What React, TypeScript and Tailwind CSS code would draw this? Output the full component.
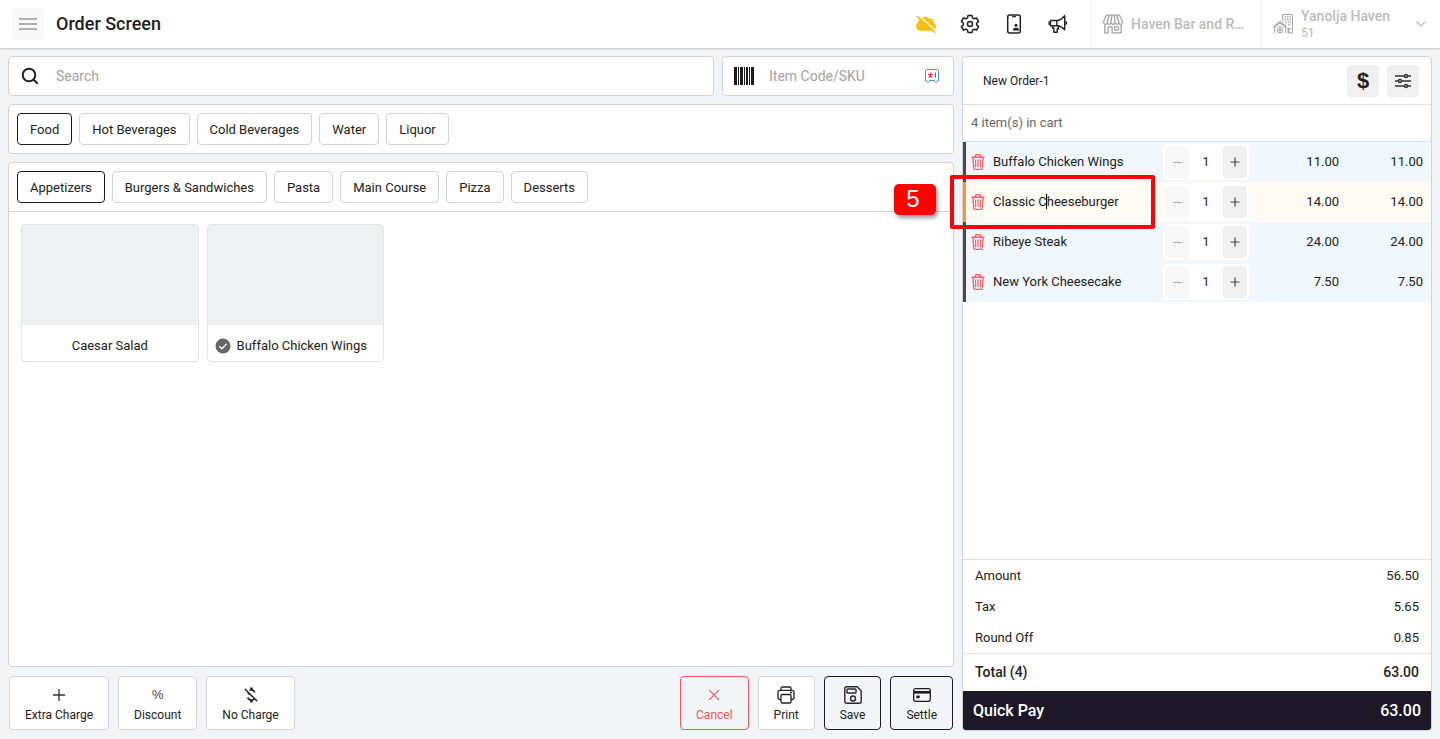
import { useState } from 'react'
import { clsx } from 'clsx'

interface CartItem {
  id: number
  name: string
  qty: number
  price: number
}

const categories = ['Food', 'Hot Beverages', 'Cold Beverages', 'Water', 'Liquor']
const subCategories = ['Appetizers', 'Burgers & Sandwiches', 'Pasta', 'Main Course', 'Pizza', 'Desserts']
const products = ['Caesar Salad', 'Buffalo Chicken Wings']

const cartItems: CartItem[] = [
  { id: 1, name: 'Buffalo Chicken Wings', qty: 1, price: 11 },
  { id: 2, name: 'Classic Cheeseburger', qty: 1, price: 14 },
  { id: 3, name: 'Ribeye Steak', qty: 1, price: 24 },
  { id: 4, name: 'New York Cheesecake', qty: 1, price: 7.5 },
]

const summary = [
  { label: 'Amount', value: '56.50' },
  { label: 'Tax', value: '5.65' },
  { label: 'Round Off', value: '0.85' },
]

function CloudOffIcon() {
  return (
    <svg viewBox="0 0 20 20" className="h-5 w-5" aria-hidden="true">
      <path
        d="M4.600 16.800A4.500 4.500 0 0 1 2 8.600 6 6 0 0 1 6.500 3.200a6 6 0 0 1 6.700 1.600 3.600 3.600 0 0 1 4.500 4.400A4 4 0 0 1 16.500 16.800z"
        fill="#fdc010"
      />
      <path d="M2.400 1 20 17" stroke="#fff" strokeWidth="1.300" />
      <path d="M1.400 2.600 18.600 18.200" stroke="#fdc010" strokeWidth="1.700" strokeLinecap="round" />
    </svg>
  )
}

function GearIcon() {
  return (
    <svg viewBox="0 0 24 24" className="h-5 w-5" fill="none" stroke="#222" strokeWidth="1.8" strokeLinejoin="round" aria-hidden="true">
      <path d="M9.6 1.700h4.8l.6 3 1.9 1.1 2.9-1 2.5 4.2-2.3 1.9v2.2l2.3 2-2.5 4.1-2.9-1-1.9 1.1-.6 3H9.6l-.6-3-1.9-1.1-2.9 1-2.5-4.1 2.3-2v-2.2L1.700 9l2.500-4.200 2.900 1L9 4.700z" />
      <circle cx="12" cy="12" r="3" />
    </svg>
  )
}

function PhoneUserIcon() {
  return (
    <svg viewBox="0 0 20 20" className="h-5 w-5" fill="none" stroke="#222" strokeWidth="1.5" aria-hidden="true">
      <rect x="3.700" y="1" width="12.600" height="18" rx="2" />
      <path d="M8 2.700h4" strokeWidth="1.200" />
      <circle cx="12" cy="11.300" r="1.500" fill="#222" stroke="none" />
      <path d="M9 16.600v-1.200c0-1 1.200-1.600 3-1.600s3 .6 3 1.600v1.200z" fill="#222" stroke="none" />
    </svg>
  )
}

function MegaphoneIcon() {
  return (
    <svg viewBox="0 0 20 20" className="h-5 w-5" fill="none" stroke="#222" strokeWidth="1.400" strokeLinejoin="round" aria-hidden="true">
      <path d="M2.500 6.500H9.500c2.500-.2 4.800-1.800 7.200-4.700v14c-2.400-2.700-4.700-3.900-7.200-4H2.500z" />
      <path d="M8.800 6.500v5.300M4.500 11.800v2.200h1.300v4.300h3.400v-3.600h1.200v-2.700" />
      <path d="M17 7.700c2.200 0 2.200 2.700 0 2.700M1.200 7.300v3.700" />
    </svg>
  )
}

function StoreIcon() {
  return (
    <svg viewBox="0 0 20 20" className="h-5 w-5 shrink-0" fill="none" stroke="#a3a3a3" strokeWidth="1.300" strokeLinejoin="round" aria-hidden="true">
      <path d="M3.500 1.200h13L19.300 7v1.500c0 2.400-3.700 2.400-3.700 0 0 2.400-3.700 2.400-3.700 0 0 2.400-3.800 2.400-3.800 0 0 2.400-3.700 2.400-3.700 0 0 2.400-3.700 2.400-3.700 0V7z" />
      <path d="M6.300 1.500 4.400 7v1.500M8.800 1.500 8.100 7v1.500M11.200 1.500l.7 5.500v1.500M13.700 1.500 15.600 7v1.500" />
      <path d="M1.800 10.500v8.300h3.400v-6h3.900v6h9.100v-8.300M11.500 12.800h4v3h-4z" />
    </svg>
  )
}

function PropertyIcon() {
  return (
    <svg viewBox="0 0 20 20" className="h-5 w-5 shrink-0" fill="none" stroke="#a8a8a8" aria-hidden="true">
      <path d="M9.500 7V.5h10v18.500H15M14 14.500h4" />
      <path d="M15.500 15v4" strokeWidth="2" />
      <path d="M11.500 3h6.500M11.500 5.500h6.500M12.500 8h5.500M15 10.500h3" strokeWidth="1.400" strokeDasharray="1.400 1.100" />
      <path d="M.6 13.500 7 8l6.400 5.500" strokeWidth="1.900" />
      <path d="M1.500 13v6M12.500 13v6M4.800 18.500v-4c0-2.700 4.400-2.700 4.400 0v4zM7 12.500v6M4.800 15.700h4.400" />
    </svg>
  )
}

function TrashIcon() {
  return (
    <svg viewBox="0 0 14 16" className="h-4 w-3.5" fill="none" stroke="#fb6268" strokeWidth="1.400" aria-hidden="true">
      <path d="M.5 3.300h13M4.500 3V1.600c0-.6.3-.9.900-.9h3.200c.6 0 .9.300.9.900V3" />
      <path d="M1.900 3.500 2.700 14c.1.900.6 1.400 1.400 1.400h5.800c.8 0 1.300-.5 1.400-1.400l.8-10.500" />
      <path d="M4.600 5.600v7.600M7 5.600v7.600M9.400 5.600v7.600" strokeWidth="1.200" />
    </svg>
  )
}

function BarcodeIcon() {
  return (
    <svg viewBox="0 0 20 18" className="h-[18px] w-5 shrink-0" fill="#1c1c1c" aria-hidden="true">
      <path d="M0 0h3v18H0zM4 0h1v18H4zM6 0h3v18H6zM10 0h1v18h-1zM12 0h2v18h-2zM15 0h1v18h-1zM17 0h3v18h-3z" />
    </svg>
  )
}

function ScanIcon() {
  return (
    <svg viewBox="0 0 14 14" className="h-3.5 w-3.5 shrink-0" fill="none" stroke="#4d90cf" strokeWidth="1" aria-hidden="true">
      <path d="M2 .5h10c1 0 1.500.5 1.500 1.500v9.500h-1c0 2.600-3 2.600-3 0h-5c0 2.600-3 2.600-3 0h-1V2C.5 1 1 .5 2 .5z" />
      <path d="M10.500 3.500v5" stroke="#3b6ea8" />
      <path d="M5.500 3.500V6M3 5.300 5.500 6 8 5.300M4 8.600 5.500 6 7 8.600" stroke="#f03b47" strokeWidth="1.200" />
    </svg>
  )
}

function SlidersIcon() {
  return (
    <svg viewBox="0 0 16 16" className="h-4 w-4" fill="none" stroke="#333" strokeWidth="1.500" aria-hidden="true">
      <path d="M0 3h9.500M12.500 3H16M0 8h3.500M6.500 8H16M0 13h9.500M12.500 13H16" />
      <circle cx="11" cy="3" r="1.500" />
      <circle cx="5" cy="8" r="1.500" />
      <circle cx="11" cy="13" r="1.500" />
    </svg>
  )
}

function NoChargeIcon() {
  return (
    <svg viewBox="0 0 24 24" className="h-5 w-5" fill="#222" aria-hidden="true">
      <path d="M12.500 6.900c1.780 0 2.440.85 2.500 2.100h2.210c-.07-1.720-1.120-3.300-3.210-3.810V3h-3v2.160c-.53.12-1.030.3-1.480.54l1.470 1.470c.41-.17.91-.27 1.510-.27zM5.330 4.060 4.060 5.330 7.500 8.770c0 2.080 1.560 3.210 3.910 3.910l3.510 3.510c-.34.48-1.050.91-2.420.91-2.060 0-2.870-.92-2.980-2.100h-2.200c.12 2.190 1.760 3.420 3.680 3.830V21h3v-2.150c.96-.18 1.820-.55 2.450-1.120l2.220 2.220 1.270-1.270L5.330 4.060z" />
    </svg>
  )
}

function PrinterIcon() {
  return (
    <svg viewBox="0 0 18 18" className="h-[18px] w-[18px]" fill="none" stroke="#222" strokeWidth="1.300" aria-hidden="true">
      <path d="M4 4V2.500C4 1.500 4.600 1 5.500 1h7c.9 0 1.500.5 1.500 1.500V4" />
      <path d="M4 13.500H3c-1.300 0-2-.7-2-2V6.400C1 5 1.800 4.300 3 4.300h12c1.200 0 2 .7 2 2.100v5.100c0 1.300-.7 2-2 2h-1" />
      <rect x="4" y="8.500" width="10" height="8.500" rx="1.200" />
      <path d="M13 6.500h2" />
    </svg>
  )
}

function SaveIcon() {
  return (
    <svg viewBox="0 0 18 18" className="h-[18px] w-[18px]" fill="none" stroke="#2b2734" strokeWidth="1.400" aria-hidden="true">
      <path d="M2.800.8h10.400l4 4.200v10.200c0 1.300-.7 2-2 2H2.800c-1.300 0-2-.7-2-2V2.800c0-1.300.7-2 2-2z" />
      <rect x="3" y="3" width="9" height="4" rx=".8" />
      <circle cx="9" cy="12.500" r="2.500" />
    </svg>
  )
}

function CardIcon() {
  return (
    <svg viewBox="0 0 18 18" className="h-[18px] w-[18px]" fill="none" stroke="#1f1a28" strokeWidth="1.300" aria-hidden="true">
      <rect x=".7" y="2.700" width="16.600" height="12.600" rx="2" />
      <path d="M1 6.300h16" strokeWidth="2.600" />
      <path d="M3.300 10.900h3.400" strokeWidth="2.600" />
    </svg>
  )
}

function TabButton({ label, active, onClick }: { label: string; active: boolean; onClick: () => void }) {
  return (
    <button
      type="button"
      onClick={onClick}
      className={clsx(
        'h-8 rounded border bg-white px-3 pt-0.5 text-[13px] text-[#212121]',
        active ? 'border-[#1e1928]' : 'border-[#d0d3d9]'
      )}
    >
      {label}
    </button>
  )
}

interface ActionButtonProps {
  label: string
  icon: React.ReactNode
  className?: string
}

function ActionButton({ label, icon, className }: ActionButtonProps) {
  return (
    <button
      type="button"
      className={clsx('flex h-[54px] flex-col items-center rounded border px-[15px] pt-2 text-xs', className)}
    >
      <span className="flex h-5 items-center">{icon}</span>
      <span className="leading-5">{label}</span>
    </button>
  )
}

function Header() {
  return (
    <header className="flex h-12 shrink-0 items-center bg-white shadow-[0_1px_2px_rgba(0,0,0,0.2)]">
      <button type="button" aria-label="Menu" className="ml-3 flex h-8 w-8 items-center justify-center rounded bg-[#f8f8f8]">
        <svg viewBox="0 0 18 12" className="h-3 w-[18px]" stroke="#999" strokeWidth="1.500" aria-hidden="true">
          <path d="M0 1h18M0 6h18M0 11h18" />
        </svg>
      </button>
      <h1 className="ml-3 flex-1 text-lg font-medium text-[#222]">Order Screen</h1>

      <div className="mr-[22px] flex items-center gap-6">
        <button type="button" aria-label="Offline"><CloudOffIcon /></button>
        <button type="button" aria-label="Settings"><GearIcon /></button>
        <button type="button" aria-label="Device"><PhoneUserIcon /></button>
        <button type="button" aria-label="Announcements"><MegaphoneIcon /></button>
      </div>

      <button type="button" className="flex h-full w-[170px] items-center gap-2 border-l border-[#f2f2f2] px-3 text-sm font-medium text-[#bbb]">
        <StoreIcon />
        <span className="whitespace-nowrap">Haven Bar and R…</span>
      </button>
      <button type="button" className="flex h-full w-[180px] items-center gap-2 border-l border-[#f2f2f2] pr-[14px] pl-3 text-left text-[#bbb]">
        <PropertyIcon />
        <span className="flex-1">
          <span className="block text-sm leading-[18px] font-medium">Yanolja Haven</span>
          <span className="block text-xs leading-4">51</span>
        </span>
        <svg viewBox="0 0 10 6" className="h-1.5 w-2.5" fill="none" stroke="#bbb" strokeWidth="1.200" aria-hidden="true">
          <path d="M.5.5 5 5 9.500.5" />
        </svg>
      </button>
    </header>
  )
}

function CartRow({ item, selected }: { item: CartItem; selected: boolean }) {
  return (
    <tr className={clsx('h-10', selected ? 'bg-[#fffaf3]' : 'bg-[#f1f7fe]')}>
      <td className={clsx('relative border-l-[3px] p-0', selected ? 'border-[#ff922b]' : 'border-[#4b4652]')}>
        <div className="flex items-center gap-2 pl-[5px]">
          <button type="button" aria-label={`Remove ${item.name}`}><TrashIcon /></button>
          {selected ? (
            <span>
              Classic C<span className="-ml-px inline-block h-[15px] w-px bg-black align-[-3px]" />heeseburger
            </span>
          ) : (
            <span>{item.name}</span>
          )}
        </div>
        {selected && (
          <>
            <div className="pointer-events-none absolute -top-[7px] -left-4 h-[54px] w-[205px] rounded-[2px] border-4 border-[#fe0000]" />
            <div className="absolute top-0.5 -left-[72px] flex h-[31px] w-[42px] items-center justify-center rounded-[5px] bg-[#fe0000] pr-1 pb-0.5 font-['Liberation_Sans',sans-serif] text-2xl text-white shadow-[2px_3px_4px_rgba(0,0,0,0.4)]">
              5
            </div>
          </>
        )}
      </td>
      <td className="p-0">
        <div className="flex h-9 items-center rounded bg-white p-0.5">
          <button type="button" disabled aria-label="Decrease" className="flex h-8 w-6 shrink-0 items-center justify-center rounded bg-[#f8f8f8]">
            <span className="h-px w-[9px] bg-[#aaa]" />
          </button>
          <input
            aria-label={`Quantity of ${item.name}`}
            defaultValue={item.qty}
            className="w-full min-w-0 bg-transparent text-center text-[#1e2a66] outline-none"
          />
          <button type="button" aria-label="Increase" className="flex h-8 w-6 shrink-0 items-center justify-center rounded bg-[#f0f0f0]">
            <svg viewBox="0 0 10 10" className="h-2.5 w-2.5" stroke="#444" strokeWidth="1.200" aria-hidden="true">
              <path d="M5 .5v9M.5 5h9" />
            </svg>
          </button>
        </div>
      </td>
      <td className="p-0 text-right">{item.price.toFixed(2)}</td>
      <td className="py-0 pr-2 pl-0 text-right">{(item.qty * item.price).toFixed(2)}</td>
    </tr>
  )
}

export default function App() {
  const [category, setCategory] = useState('Food')
  const [subCategory, setSubCategory] = useState('Appetizers')

  return (
    <div className="flex min-h-screen flex-col bg-[#f1f5f8] font-['Roboto',sans-serif] text-[13px] text-[#212121]">
      <Header />

      <main className="flex flex-1 gap-2 p-2">
        <section className="flex min-w-0 flex-1 flex-col gap-2">
          <div className="flex gap-2">
            <label className="flex h-10 flex-1 items-center rounded border border-[#d0d3d9] bg-white px-3">
              <svg viewBox="0 0 18 18" className="h-[18px] w-[18px] shrink-0" fill="none" stroke="#222" strokeWidth="2" aria-hidden="true">
                <circle cx="8" cy="8" r="6.300" />
                <path d="m12.500 12.500 4.200 4.200" />
              </svg>
              <input
                type="text"
                aria-label="Search"
                placeholder="Search"
                className="ml-[17px] min-w-0 flex-1 text-sm outline-none placeholder:text-[#a3a3a3]"
              />
            </label>
            <label className="flex h-10 w-[232px] items-center rounded border border-[#d0d3d9] bg-white pr-3.5 pl-[11px]">
              <BarcodeIcon />
              <input
                type="text"
                aria-label="Item Code/SKU"
                placeholder="Item Code/SKU"
                className="ml-[15px] min-w-0 flex-1 text-sm outline-none placeholder:text-[#a3a3a3]"
              />
              <ScanIcon />
            </label>
          </div>

          <nav className="flex flex-wrap gap-[7px] rounded border border-[#d0d3d9] bg-white p-2">
            {categories.map((name) => (
              <TabButton key={name} label={name} active={name === category} onClick={() => setCategory(name)} />
            ))}
          </nav>

          <div className="flex-1 rounded border border-[#d0d3d9] bg-white">
            <nav className="flex flex-wrap gap-[7px] border-b border-[#d0d3d9] p-2">
              {subCategories.map((name) => (
                <TabButton key={name} label={name} active={name === subCategory} onClick={() => setSubCategory(name)} />
              ))}
            </nav>
            <div className="grid grid-cols-5 gap-2 p-3">
              {products.map((name) => (
                <button key={name} type="button" className="overflow-hidden rounded border border-[#e3e4e6] bg-white">
                  <span className="block h-[100px] bg-[#eff0f2]" />
                  <span className="flex h-9 items-center justify-center gap-1.5 px-[7px] pt-1.5">
                    {cartItems.some((item) => item.name === name) && (
                      <svg viewBox="0 0 16 16" className="h-4 w-4 shrink-0" fill="none" aria-hidden="true">
                        <circle cx="8" cy="8" r="7.500" fill="#666" />
                        <path d="m4.300 8.300 2.500 2.500 5-5.200" stroke="#fff" strokeWidth="1.300" />
                      </svg>
                    )}
                    <span className={clsx(cartItems.some((item) => item.name === name) && 'flex-1 text-left')}>{name}</span>
                  </span>
                </button>
              ))}
            </div>
          </div>

          <footer className="flex items-center justify-between p-px">
            <div className="flex gap-[9px]">
              <ActionButton
                label="Extra Charge"
                className="border-[#d0d3d9] bg-white"
                icon={
                  <svg viewBox="0 0 12 12" className="h-3 w-3" stroke="#333" strokeWidth="1.300" aria-hidden="true">
                    <path d="M6 0v12M0 6h12" />
                  </svg>
                }
              />
              <ActionButton label="Discount" className="border-[#d0d3d9] bg-white" icon={<span className="font-['Liberation_Sans',sans-serif] text-[13px] text-[#444]">%</span>} />
              <ActionButton label="No Charge" className="border-[#d0d3d9] bg-white" icon={<NoChargeIcon />} />
            </div>
            <div className="flex gap-[9px]">
              <ActionButton
                label="Cancel"
                className="border-[#ff5252] text-[#ff5252]"
                icon={
                  <svg viewBox="0 0 10 10" className="h-2.5 w-2.5" stroke="#ff5252" strokeWidth="1.200" aria-hidden="true">
                    <path d="m0 0 10 10M10 0 0 10" />
                  </svg>
                }
              />
              <ActionButton label="Print" className="border-[#d0d3d9] bg-white" icon={<PrinterIcon />} />
              <ActionButton label="Save" className="border-[#1e1928]" icon={<SaveIcon />} />
              <ActionButton label="Settle" className="border-[#1e1928]" icon={<CardIcon />} />
            </div>
          </footer>
        </section>

        <aside className="flex w-[470px] shrink-0 flex-col rounded border border-[#d0d3d9] bg-white">
          <div className="flex h-12 items-center gap-2 border-b border-[#e0e1e3] pr-3 pl-5">
            <h2 className="flex-1 text-xs text-[#1e1928]">New Order-1</h2>
            <button type="button" aria-label="Currency" className="flex h-8 w-8 items-center justify-center rounded bg-[#f0f0f0] font-['Liberation_Sans',sans-serif] text-[22px] font-bold">
              $
            </button>
            <button type="button" aria-label="Order options" className="flex h-8 w-8 items-center justify-center rounded bg-[#f0f0f0]">
              <SlidersIcon />
            </button>
          </div>
          <p className="border-b border-[#e0e1e3] px-2 py-2 leading-5 text-[#666]">4 item(s) in cart</p>

          <table className="w-full table-fixed border-separate border-spacing-0">
            <colgroup>
              <col />
              <col className="w-[86px]" />
              <col className="w-[90px]" />
              <col className="w-[92px]" />
            </colgroup>
            <tbody>
              {cartItems.map((item) => (
                <CartRow key={item.id} item={item} selected={item.id === 2} />
              ))}
            </tbody>
          </table>

          <dl className="mt-auto border-t border-[#e0e1e3]">
            {summary.map((row) => (
              <div key={row.label} className="flex h-[31px] items-center justify-between px-3">
                <dt>{row.label}</dt>
                <dd>{row.value}</dd>
              </div>
            ))}
            <div className="flex h-[38px] items-center justify-between border-t border-[#e0e1e3] px-3 pb-0.5 text-sm font-medium">
              <dt>Total (4)</dt>
              <dd>63.00</dd>
            </div>
          </dl>
          <button type="button" className="flex h-[39px] items-center justify-between rounded-b-[3px] bg-[#1e1928] px-2.5 text-base font-medium text-white">
            <span>Quick Pay</span>
            <span>63.00</span>
          </button>
        </aside>
      </main>
    </div>
  )
}
